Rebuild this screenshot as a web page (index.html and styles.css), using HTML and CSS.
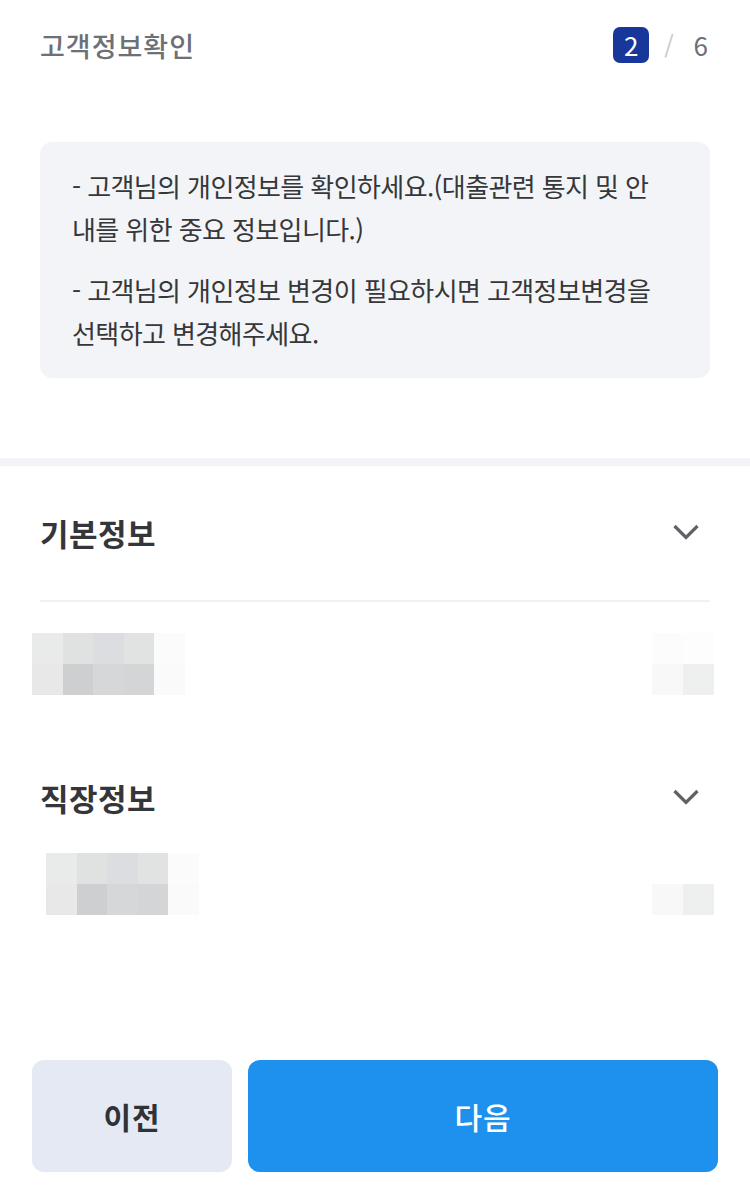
FILE: index.html
```html
<!DOCTYPE html>
<html lang="ko">
<head>
<meta charset="utf-8">
<title>고객정보확인</title>
<link rel="stylesheet" href="styles.css">
</head>
<body>
<div class="page">
  <header class="top">
    <h1 class="title">고객정보확인</h1>
    <div class="step"><span class="step-cur">2</span><span class="step-sep">/</span><span class="step-total">6</span></div>
  </header>

  <div class="notice">
    <p>- 고객님의 개인정보를 확인하세요.(대출관련 통지 및 안내를 위한 중요 정보입니다.)</p>
    <p>- 고객님의 개인정보 변경이 필요하시면 고객정보변경을 선택하고 변경해주세요.</p>
  </div>

  <div class="band"></div>

  <section class="sec sec-basic">
    <div class="sec-head">
      <h2 class="sec-title">기본정보</h2>
      <span class="chev"><svg width="32" height="32" viewBox="0 0 32 32"><path d="M4.5 10 L16 21.5 L27.5 10" fill="none" stroke="#5f6368" stroke-width="3.2"/></svg></span>
    </div>
    <div class="divider"></div>
    <div class="blur-row blur-1">
      <div class="pix pix-l">
        <i class="a1"></i><i class="a2"></i><i class="a3"></i><i class="a4"></i><i class="a5"></i>
        <i class="b1"></i><i class="b2"></i><i class="b3"></i><i class="b4"></i><i class="b5"></i>
      </div>
      <div class="pix pix-r">
        <i class="r1"></i><i class="r2"></i><i class="r3"></i><i class="r4"></i>
      </div>
    </div>
  </section>

  <section class="sec sec-work">
    <div class="sec-head">
      <h2 class="sec-title">직장정보</h2>
      <span class="chev"><svg width="32" height="32" viewBox="0 0 32 32"><path d="M4.5 10 L16 21.5 L27.5 10" fill="none" stroke="#5f6368" stroke-width="3.2"/></svg></span>
    </div>
    <div class="blur-row blur-2">
      <div class="pix pix-l">
        <i class="a1"></i><i class="a2"></i><i class="a3"></i><i class="a4"></i><i class="a5"></i>
        <i class="b1"></i><i class="b2"></i><i class="b3"></i><i class="b4"></i><i class="b5"></i>
      </div>
      <div class="pix pix-r">
        <i class="w0"></i><i class="w0"></i><i class="r3"></i><i class="r4"></i>
      </div>
    </div>
  </section>

  <footer class="actions">
    <button class="btn btn-prev" type="button">이전</button>
    <button class="btn btn-next" type="button">다음</button>
  </footer>
</div>
</body>
</html>
```

FILE: styles.css
```css
* { box-sizing: border-box; }
html, body { margin: 0; padding: 0; background: #ffffff; }
body {
  font-family: "Noto Sans CJK KR", "Noto Sans", "Liberation Sans", sans-serif;
  color: #333333;
}
.page {
  min-height: 100vh;
  display: flex;
  flex-direction: column;
}
.top {
  height: 90px;
  padding: 0 40px;
  display: flex;
  align-items: center;
  justify-content: space-between;
}
.title {
  margin: 0;
  font-size: 27px;
  line-height: 1;
  font-weight: 500;
  color: #6d7076;
  letter-spacing: 1px;
}
.step {
  display: flex;
  align-items: center;
  font-size: 26px;
  line-height: 1;
  color: #6d7076;
}
.step-cur {
  width: 36px;
  height: 36px;
  border-radius: 7px;
  background: #17389a;
  color: #ffffff;
  display: flex;
  align-items: center;
  justify-content: center;
  font-size: 26px;
}
.step-sep {
  margin-left: 15px;
  margin-right: 20px;
  color: #c6c8cc;
  font-size: 24px;
}
.step-total { color: #6d7076; margin-right: 2px; }

.notice {
  margin: 52px 40px 0;
  padding: 22px 44px 24px 32px;
  background: #f3f4f8;
  border-radius: 12px;
  font-size: 26px;
  line-height: 43px;
  letter-spacing: -0.6px;
  color: #363739;
}
.notice p { margin: 0; }
.notice p + p { margin-top: 18px; }

.band {
  margin-top: 80px;
  height: 8px;
  background: #f3f4f8;
}

.sec-basic { padding-top: 34px; padding-bottom: 70px; }
.sec-head {
  height: 64px;
  margin: 0 40px;
  display: flex;
  align-items: center;
  justify-content: space-between;
}
.sec-title {
  margin: 0;
  font-size: 31px;
  line-height: 1;
  font-weight: 700;
  letter-spacing: 0.5px;
  color: #35363a;
}
.chev {
  width: 32px;
  height: 32px;
  margin-right: 8px;
  display: flex;
}
.divider {
  margin: 36px 40px 0;
  height: 2px;
  background: #f1f1f3;
}
.blur-row {
  display: flex;
  justify-content: space-between;
  padding-right: 36px;
}
.blur-1 { margin-top: 31px; padding-left: 32px; }
.blur-2 { margin-top: 24px; padding-left: 46px; }

.pix {
  display: grid;
  grid-auto-rows: 31px;
  filter: blur(0.6px);
}
.pix-l { grid-template-columns: repeat(5, 30.6px); }
.pix-r { grid-template-columns: repeat(2, 31px); }
.pix i { display: block; }
.a1 { background: #e9ebea; }
.a2 { background: #e0e2e1; }
.a3 { background: #dcdde0; }
.a4 { background: #e1e3e2; }
.a5 { background: #fbfbfb; }
.b1 { background: #e8e8e8; }
.b2 { background: #cdcfd1; }
.b3 { background: #d6d7d9; }
.b4 { background: #d3d5d7; }
.b5 { background: #fafafa; }
.r1 { background: #fcfcfc; }
.r2 { background: #fdfdfd; }
.r3 { background: #f8f8f8; }
.r4 { background: #eef0ef; }
.w0 { background: #ffffff; }

.actions {
  margin-top: auto;
  padding: 0 32px 32px;
  display: flex;
  gap: 16px;
}
.btn {
  height: 112px;
  border: 0;
  border-radius: 12px;
  font-family: "Noto Sans CJK KR", "Noto Sans", sans-serif;
  font-size: 30px;
  line-height: 1;
  letter-spacing: 1px;
  padding: 0;
}
.btn-prev {
  width: 200px;
  background: #e4e9f3;
  color: #2f3237;
  font-weight: 700;
}
.btn-next {
  flex: 1;
  background: #1e90ed;
  color: #ffffff;
  font-weight: 500;
}
```
